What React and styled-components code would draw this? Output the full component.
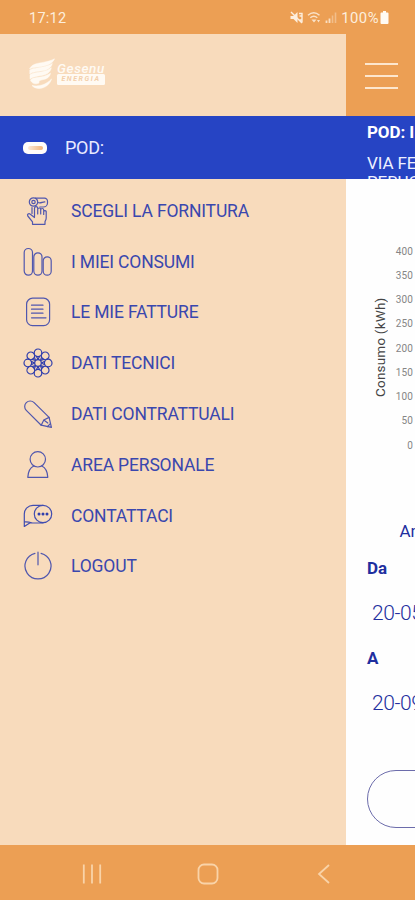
import styled, {createGlobalStyle} from "styled-components";

const GlobalStyle = createGlobalStyle`
  * {
    box-sizing: border-box;
    margin: 0;
    padding: 0;
  }

  :root {
    --color-orange: #ec9f54;
    --color-peach: #f8dbbc;
    --color-cream: #fdeedd;
    --color-blue: #2644c4;
    --color-ink: #3a47ae;
    --color-navy: #1f2f9f;
  }

  body {
    font-family: Roboto, sans-serif;
    overflow: hidden;
  }
`;

const Screen = styled.div`
  display: flex;
  flex-direction: column;
  width: 415px;
  height: 900px;
  overflow: hidden;
  background-color: var(--color-orange);
`;

const StatusBar = styled.header`
  display: flex;
  align-items: center;
  justify-content: space-between;
  flex: 0 0 34px;
  padding: 2px 26px 0 29px;
  font-size: 14.5px;
  letter-spacing: 0.25px;
  color: var(--color-cream);
`;

const StatusIcons = styled.div`
  display: flex;
  align-items: center;
  gap: 4px;
`;

const BatteryLevel = styled.span`
  display: flex;
  align-items: center;
  gap: 1px;
  font-size: 14.8px;
  letter-spacing: 0.5px;
`;

const Main = styled.main`
  display: flex;
  flex: 1;
  min-height: 0;
`;

const Drawer = styled.aside`
  display: flex;
  flex-direction: column;
  flex: 0 0 346.4px;
  background-color: var(--color-peach);
`;

const Brand = styled.div`
  display: flex;
  align-items: center;
  gap: 2px;
  flex: 0 0 82px;
  padding: 0 0 3px 29px;
  color: #fffaf3;
`;

const BrandText = styled.div`
  display: flex;
  flex-direction: column;
  width: 48px;
`;

const BrandName = styled.span`
  font-size: 13.5px;
  font-weight: 500;
  font-style: italic;
  line-height: 12px;
  letter-spacing: 0.6px;
`;

const BrandTag = styled.span`
  height: 11px;
  border-radius: 1.5px;
  background-color: #fffaf3;
  font-size: 7px;
  font-weight: 700;
  font-style: italic;
  line-height: 11px;
  letter-spacing: 1.6px;
  text-align: center;
  color: #f3cfaa;
`;

const DrawerPod = styled.div`
  display: flex;
  align-items: center;
  gap: 18px;
  flex: 0 0 63px;
  padding-left: 23px;
  font-size: 18px;
  letter-spacing: -0.3px;
  color: #e8eaff;
  background-color: var(--color-blue);
`;

const PodPill = styled.span`
  display: flex;
  align-items: center;
  justify-content: center;
  width: 24px;
  height: 12px;
  border-radius: 5px;
  background-color: #fffdfa;

  &::before {
    content: "";
    width: 15px;
    height: 4px;
    border-radius: 2px;
    background: linear-gradient(90deg, #fce9d6, #f3b67c);
  }
`;

const Menu = styled.ul`
  display: flex;
  flex-direction: column;
  padding-top: 6.5px;
  list-style: none;
`;

const MenuItem = styled.li`
  display: flex;
  align-items: center;
  gap: 18px;
  height: 50.8px;
  padding-left: 23px;
  font-size: 17.5px;
  letter-spacing: -0.16px;
  color: var(--color-ink);
`;

const Icon = styled.svg`
  flex: none;
  width: 30px;
  height: 30px;
  fill: none;
  stroke: #5057ae;
  stroke-width: 1.2;
  stroke-linecap: round;
  stroke-linejoin: round;
`;

const Page = styled.section`
  display: flex;
  flex-direction: column;
  flex: 1;
  min-width: 0;
  overflow: hidden;
  background-color: #fefefe;
`;

const PageHeader = styled.div`
  display: flex;
  flex-direction: column;
  justify-content: center;
  gap: 10px;
  flex: 0 0 82px;
  padding: 1px 0 0 18.6px;
  background-color: var(--color-orange);
`;

const Bar = styled.span`
  width: 33px;
  height: 2px;
  background-color: #fde6cd;
`;

const PodBanner = styled.div`
  flex: 0 0 63px;
  padding: 7px 0 0 20.6px;
  overflow: hidden;
  white-space: nowrap;
  font-size: 17px;
  line-height: 19.5px;
  letter-spacing: -0.1px;
  color: #eef0ff;
  background-color: var(--color-blue);

  strong {
    display: block;
    margin-bottom: 11px;
    color: white;
  }
`;

const Chart = styled.div`
  display: flex;
  flex: 0 0 280px;
  padding: 60.5px 2px 0 25.6px;
`;

const AxisTitle = styled.p`
  width: 16px;
  height: 99px;
  margin-top: 58px;
  writing-mode: vertical-rl;
  transform: rotate(180deg);
  font-size: 13.5px;
  line-height: 16px;
  white-space: nowrap;
  letter-spacing: 0.2px;
  color: #444;
`;

const Ticks = styled.ol`
  flex: 1;
  list-style: none;
  text-align: right;
  font-size: 10px;
  line-height: 24.25px;
  letter-spacing: 0.15px;
  color: #858585;
`;

const Form = styled.div`
  display: flex;
  flex-direction: column;
  padding-left: 20.6px;
  white-space: nowrap;
  color: var(--color-navy);
`;

const YearLabel = styled.p`
  height: 24px;
  margin: 59.5px 0 0 32.5px;
  font-size: 17px;
  line-height: 24px;
`;

const Label = styled.label`
  height: 24px;
  margin-top: ${(props) => props.$top}px;
  font-size: 17px;
  font-weight: 700;
  line-height: 24px;
`;

const DateField = styled.p`
  height: 30px;
  margin-top: 18px;
  padding-left: 5px;
  font-size: 21px;
  font-weight: 300;
  line-height: 30px;
  letter-spacing: -0.45px;
`;

const SubmitButton = styled.button`
  width: 340px;
  height: 58px;
  margin-top: 52px;
  border: 1px solid #6c6cab;
  border-radius: 29px;
  background-color: transparent;
`;

const NavBar = styled.nav`
  flex: 0 0 55px;
  display: flex;
  align-items: center;
  justify-content: space-between;
  padding: 2px 80px 0 81px;

  svg {
    width: 22px;
    height: 22px;
    fill: none;
    stroke: #f9d3a8;
    stroke-width: 1.8;
  }
`;

const petals = [0, 45, 90, 135, 180, 225, 270, 315];

const items = [
  {
    label: "SCEGLI LA FORNITURA",
    icon: (
      <>
        <circle cx="10.5" cy="6" r="4.2" />
        <circle cx="10.5" cy="6" r="1.7" />
        <path d="M12.5 2.2h9a3 3 0 0 1 3 3.2v1.5a4.2 4.2 0 0 1-4.2 4.1h-3.5M14.8 6.5c3 1.4 4.5-.8 7-.6" />
        <path d="M11.5 20.5v-8.3a1.6 1.6 0 0 1 3.2 0V18v-4.5a1.5 1.5 0 0 1 3 0V18v-4a1.5 1.5 0 0 1 3 0v4.5-3a1.3 1.3 0 0 1 2.5 0V22c0 1.5-.8 2.7-1.2 3.8v2.5H9.5v-2.5L4.8 20a1.5 1.5 0 0 1 2.2-2l4.5 3.5M9 11.5v6" />
      </>
    ),
  },
  {
    label: "I MIEI CONSUMI",
    icon: (
      <>
        <rect x="1.2" y="1.5" width="8.3" height="26.7" rx="4.1" />
        <rect x="10.8" y="5.8" width="8.2" height="22.4" rx="4.1" />
        <rect x="20.2" y="9.8" width="8" height="18.4" rx="4" />
      </>
    ),
  },
  {
    label: "LE MIE FATTURE",
    icon: (
      <>
        <rect x="3.6" y="1.2" width="23" height="27.5" rx="6" />
        <path d="M8.5 8.2h11.5M8.5 12.2h11.5M8.5 16.2h11.5M8.5 20.8h14.5" />
      </>
    ),
  },
  {
    label: "DATI TECNICI",
    icon: (
      <g stroke="#303eac">
        <circle cx="15" cy="15" r="3.3" />
        {petals.map((angle) => (
          <g key={angle} transform={`rotate(${angle} 15 15)`}>
            <circle cx="15" cy="4.8" r="3.8" />
            <path d="M13.4 8.3L15 11.5l1.6-3.2" />
          </g>
        ))}
      </g>
    ),
  },
  {
    label: "DATI CONTRATTUALI",
    icon: (
      <>
        <path d="M3.3 11.4a5.4 5.4 0 0 1 7.8-7.8l15 14.8 2.3 10-10.2-2.2z" />
        <path d="M18.2 26.2l2.6-5.2 5.3-2.6M20.8 21l4 3M24.6 27.5l2.8-2.8" />
      </>
    ),
  },
  {
    label: "AREA PERSONALE",
    icon: (
      <>
        <circle cx="14.8" cy="9.3" r="7.7" />
        <path d="M10.8 16c-3.8 1.7-5.7 5.7-6 11.3h20c-.3-5.6-2.2-9.6-6-11.3" />
      </>
    ),
  },
  {
    label: "CONTATTACI",
    icon: (
      <g stroke="#414db0">
        <circle cx="20" cy="13" r="8.7" />
        <path d="M20 4.3H10a8.7 8.7 0 0 0-8.7 8.7v12.5L6.7 22H20M1.5 21c3-.2 5 .2 8 1" />
        <g fill="#303eac" stroke="none">
          <circle cx="16" cy="13" r="1.5" />
          <circle cx="20" cy="13" r="1.5" />
          <circle cx="24" cy="13" r="1.5" />
        </g>
      </g>
    ),
  },
  {
    label: "LOGOUT",
    icon: <path d="M12 2.3a13 13 0 1 0 6 0M15 1.2v12.6" />,
  },
];

const ticks = [400, 350, 300, 250, 200, 150, 100, 50, 0];

function StatusGlyphs() {
  return (
    <svg width="47" height="16" viewBox="0 0 47 16" fill="none" stroke="#fdeedd">
      <path d="M.5 6h3l4-4v11l-4-4h-3z" fill="#fdeedd" stroke="none" />
      <path d="M1 2l11 11M9 3.5h3v9M9.5 6h2M9.5 10h2" strokeWidth="1.4" />
      <g opacity="0.85">
        <path d="M18 5.2c3.5-3 8-3 11.5 0M20.3 7.8c2-1.7 5-1.7 7 0" strokeWidth="1.5" />
        <path d="M21.5 9.5h5L24 12.5zM27 10l1.5 2.5L30 10z" fill="#fdeedd" stroke="none" />
      </g>
      <path d="M36.5 13v-2.5M39.5 13V8.5" strokeWidth="1.8" opacity="0.8" />
      <path d="M42.5 13V5.5M45.5 13V2.5" strokeWidth="1.6" opacity="0.4" />
    </svg>
  );
}

function Battery() {
  return (
    <svg width="9" height="14" viewBox="0 0 9 14" fill="#fffaf3">
      <path d="M3 0h3v1.5h1.5a1 1 0 0 1 1 1V12a1 1 0 0 1-1 1h-6a1 1 0 0 1-1-1V2.5a1 1 0 0 1 1-1H3z" />
    </svg>
  );
}

function BrandMark() {
  return (
    <svg width="26" height="31" viewBox="0 0 26 31" fill="currentColor" stroke="currentColor" strokeWidth="0.5">
      <path d="M.5 11C3 5.500 9 5.500 15 4.200 19 3.500 22.500 2.500 25.500.8 24 5 20 7 15 8 9.500 9.200 4 9 .5 11z" />
      <path d="M.8 16V12c3-2 8-2 13-3 4-.9 7-1.800 9.500-3.500-1.200 4.600-4.500 6.300-9.500 7.300-5 1-10 .8-13 3.200z" />
      <path d="M1 21v-4.200c3-2.200 7.500-2 12-3 4-.9 7-2 9.300-4-1 4.800-4.300 6.600-9.300 7.600-5 1-9 1-12 3.600z" />
      <path d="M1.500 22c2-2.500 7-2.200 11-3.200 3.500-.8 7-2 9-3.600-.5 4-4 5.700-7 6.300-4 .8-5 1.500-4.500 3.500-4 2-7.500 0-8.500-3z" />
      <path d="M3 27.500c6 1.500 14-.5 19.500-6.500-1 5-7 9.500-12.500 9.500-3 0-5.500-1.200-7-3z" />
    </svg>
  );
}

function App() {
  return (
    <Screen>
      <GlobalStyle />
      <StatusBar>
        <span>17:12</span>
        <StatusIcons>
          <StatusGlyphs />
          <BatteryLevel>
            100%
            <Battery />
          </BatteryLevel>
        </StatusIcons>
      </StatusBar>

      <Main>
        <Drawer>
          <Brand>
            <BrandMark />
            <BrandText>
              <BrandName>Gesenu</BrandName>
              <BrandTag>ENERGIA</BrandTag>
            </BrandText>
          </Brand>
          <DrawerPod>
            <PodPill />
            POD:
          </DrawerPod>
          <Menu>
            {items.map((item) => (
              <MenuItem key={item.label}>
                <Icon viewBox="0 0 30 30">{item.icon}</Icon>
                {item.label}
              </MenuItem>
            ))}
          </Menu>
        </Drawer>

        <Page>
          <PageHeader>
            <Bar />
            <Bar />
            <Bar />
          </PageHeader>
          <PodBanner>
            <strong>POD: I</strong>
            <p>VIA FE</p>
            <p>PERUG</p>
          </PodBanner>
          <Chart>
            <AxisTitle>Consumo (kWh)</AxisTitle>
            <Ticks>
              {ticks.map((tick) => (
                <li key={tick}>{tick}</li>
              ))}
            </Ticks>
          </Chart>
          <Form>
            <YearLabel>An</YearLabel>
            <Label $top={13.5}>Da</Label>
            <DateField>20-05</DateField>
            <Label $top={18}>A</Label>
            <DateField>20-09</DateField>
            <SubmitButton />
          </Form>
        </Page>
      </Main>

      <NavBar>
        <svg viewBox="0 0 22 22">
          <path d="M2.8 1.5v19M11 1.5v19M19.2 1.5v19" />
        </svg>
        <svg viewBox="0 0 22 22">
          <rect x="1.5" y="1.5" width="19" height="19" rx="5.5" />
        </svg>
        <svg viewBox="0 0 22 22">
          <path d="M16 2L6 11l10 9" />
        </svg>
      </NavBar>
    </Screen>
  );
}

export default App;
